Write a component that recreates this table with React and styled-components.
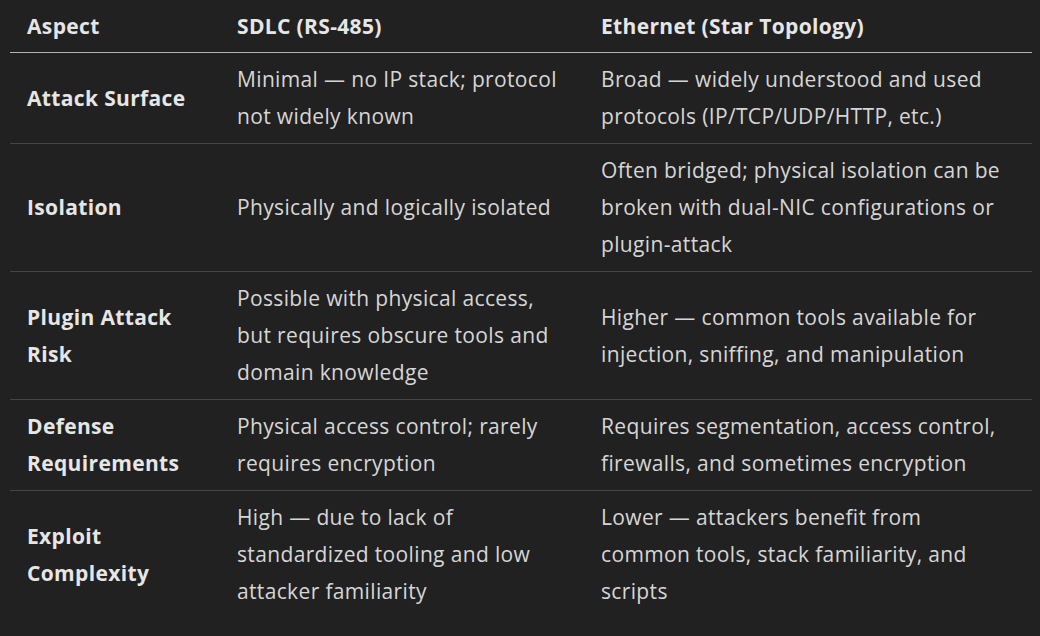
import styled, { createGlobalStyle } from 'styled-components'

const Global = createGlobalStyle`
  html, body {
    margin: 0;
    background: #212121;
  }

  body {
    font-family: 'Open Sans', 'Noto Sans', sans-serif;
    color: #dcdcdc;
  }
`

const Page = styled.div`
  width: 1040px;
  height: 636px;
  padding: 0 8px 0 10px;
  box-sizing: border-box;
  background: #212121;
  overflow: hidden;
`

const Table = styled.table`
  width: 1022px;
  border-collapse: collapse;
  table-layout: fixed;
  font-size: 21px;
  letter-spacing: 0.35px;
  line-height: 37px;
`

const HeadCell = styled.th`
  text-align: left;
  font-weight: 700;
  color: #e6e6e6;
  padding: 8px ${({ $pr }) => $pr}px 7px 17px;
  border-bottom: 1.5px solid #b4b4b4;
`

const Row = styled.tr`
  border-bottom: ${({ $last }) => ($last ? 'none' : '1px solid #454545')};
`

const Cell = styled.td`
  vertical-align: middle;
  padding: 8px ${({ $pr }) => $pr}px 8px 17px;
  font-weight: ${({ $bold }) => ($bold ? 700 : 400)};
  color: ${({ $bold }) => ($bold ? '#e6e6e6' : '#d6d6d6')};
`

// right padding per column, so each cell wraps where the reference does
const pads = [26, 11, 23]

const rows = [
  ['Attack Surface', 'Minimal — no IP stack; protocol not widely known', 'Broad — widely understood and used protocols (IP/TCP/UDP/HTTP, etc.)'],
  ['Isolation', 'Physically and logically isolated', 'Often bridged; physical isolation can be broken with dual-NIC configurations or plugin-attack'],
  ['Plugin Attack Risk', 'Possible with physical access, but requires obscure tools and domain knowledge', 'Higher — common tools available for injection, sniffing, and manipulation'],
  ['Defense Requirements', 'Physical access control; rarely requires encryption', 'Requires segmentation, access control, firewalls, and sometimes encryption'],
  ['Exploit Complexity', 'High — due to lack of standardized tooling and low attacker familiarity', 'Lower — attackers benefit from common tools, stack familiarity, and scripts'],
]

export default function App() {
  return (
    <Page>
      <Global />
      <Table>
        <colgroup>
          <col style={{ width: 210 }} />
          <col style={{ width: 364 }} />
          <col style={{ width: 448 }} />
        </colgroup>
        <thead>
          <tr>
            <HeadCell $pr={pads[0]}>Aspect</HeadCell>
            <HeadCell $pr={pads[1]}>SDLC (RS-485)</HeadCell>
            <HeadCell $pr={pads[2]}>Ethernet (Star Topology)</HeadCell>
          </tr>
        </thead>
        <tbody>
          {rows.map((row, i) => (
            <Row key={row[0]} $last={i === rows.length - 1}>
              {row.map((text, c) => (
                <Cell key={c} $bold={c === 0} $pr={pads[c]}>
                  {text}
                </Cell>
              ))}
            </Row>
          ))}
        </tbody>
      </Table>
    </Page>
  )
}
